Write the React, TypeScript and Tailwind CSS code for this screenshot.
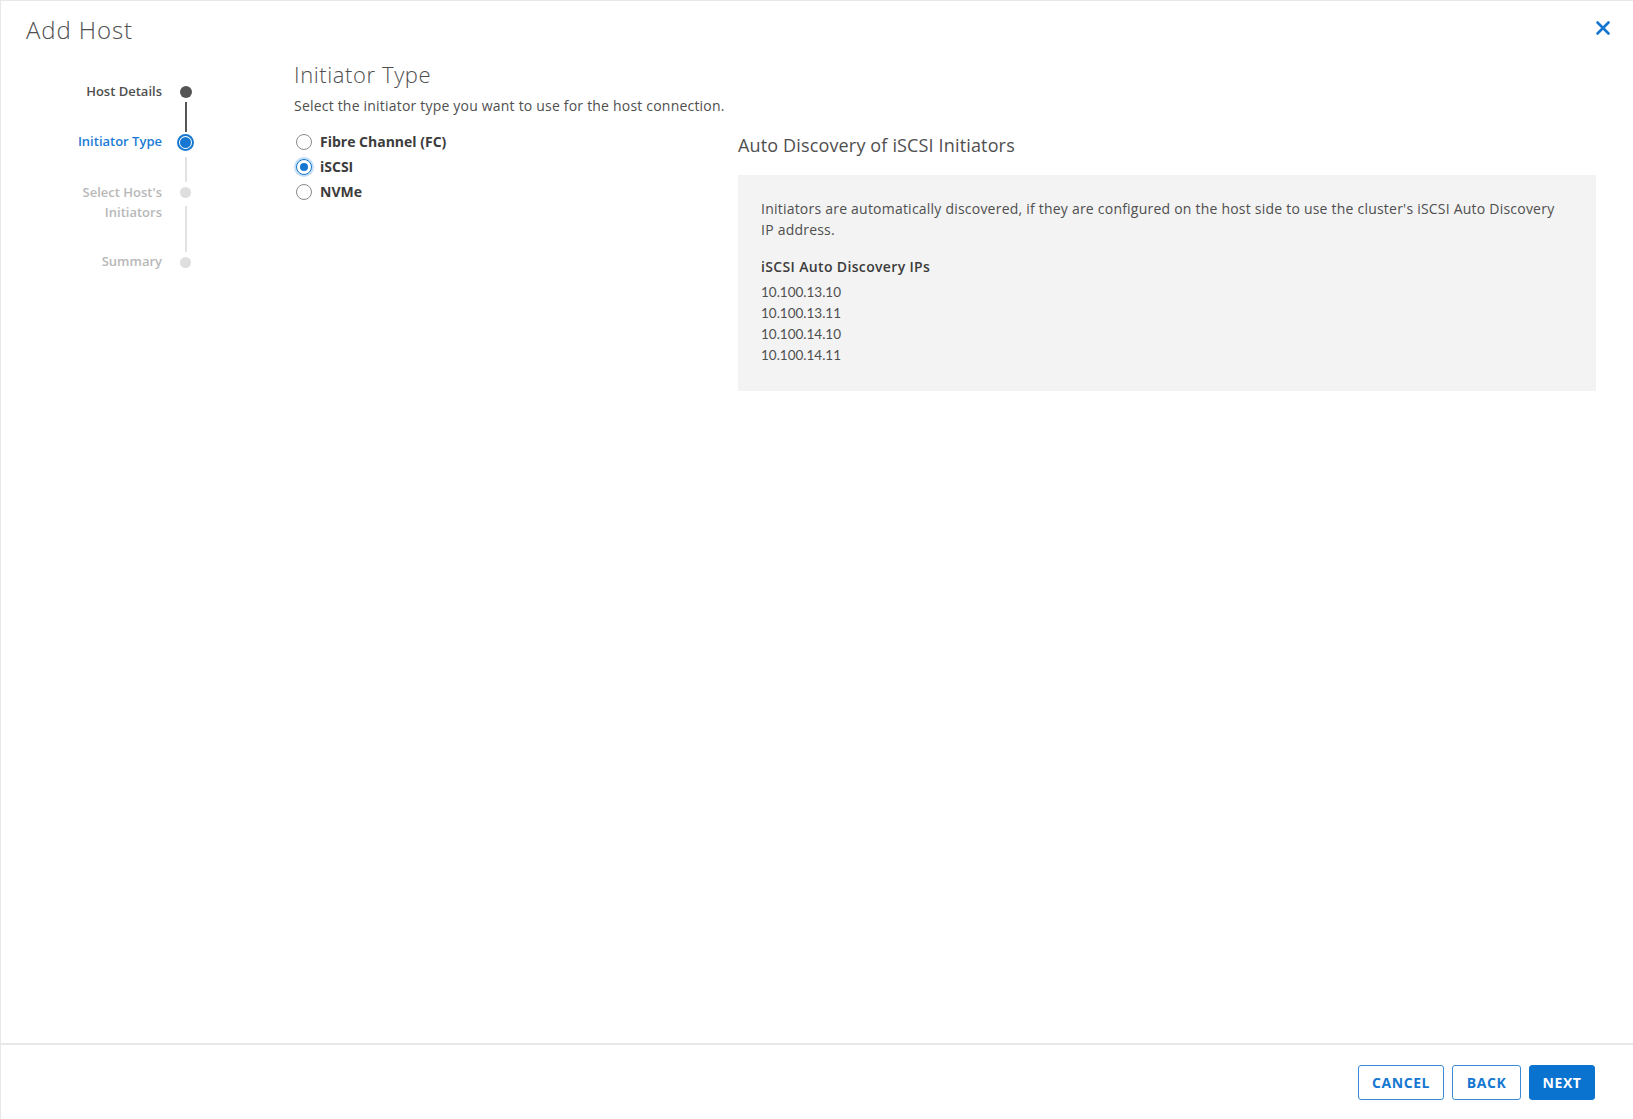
import React from "react";

const font = { fontFamily: "'Open Sans', Lato, sans-serif" };
const ipFont = { fontFamily: "Lato, 'Open Sans', sans-serif" };

function Radio({ checked, label }: { checked?: boolean; label: string }) {
  return (
    <div className="flex h-[25px] items-center">
      <div className="flex w-[26px] items-center">
        {checked ? (
          <div className="ml-[2px] flex h-[16px] w-[16px] items-center justify-center rounded-full border-[1.5px] border-[#1577d1] bg-white shadow-[0_0_0_2px_rgba(90,160,230,0.35)]">
            <div className="h-[8px] w-[8px] rounded-full bg-[#1577d1]" />
          </div>
        ) : (
          <div className="ml-[2px] h-[16px] w-[16px] rounded-full border border-[#8a8a8a] bg-white" />
        )}
      </div>
      <span className="text-[14px] font-bold text-[#3c3c3c]">{label}</span>
    </div>
  );
}

export default function App() {
  return (
    <div
      className="flex h-[1119px] w-[1633px] flex-col border-l border-t border-[#e8e8e8] bg-white text-[#565656]"
      style={font}
    >
      {/* header */}
      <div className="flex h-[44px] shrink-0 items-start justify-between pl-[25px] pr-[22px] pt-[14px]">
        <div className="text-[24px] font-light leading-[30px] tracking-[0.9px] text-[#4f4f4f]">Add Host</div>
        <svg width="16" height="16" viewBox="0 0 16 16" className="mt-[5px]">
          <path d="M2.5 2.5 L13.5 13.5 M13.5 2.5 L2.5 13.5" stroke="#1577d1" strokeWidth="2.6" strokeLinecap="round" />
        </svg>
      </div>

      {/* body */}
      <div className="flex flex-1">
        {/* stepper */}
        <div className="w-[293px] shrink-0 pt-[37px]">
          {/* Host Details */}
          <div className="flex h-[20px] items-center">
            <div className="w-[161px] text-right text-[13px] font-semibold text-[#4f4f4f]">Host Details</div>
            <div className="flex w-[47px] justify-center">
              <div className="h-[12px] w-[12px] rounded-full bg-[#555555]" />
            </div>
          </div>
          <div className="flex">
            <div className="w-[161px]" />
            <div className="flex w-[47px] justify-center">
              <div className="h-[30px] w-[2px] bg-[#555555]" />
            </div>
          </div>
          {/* Initiator Type */}
          <div className="flex h-[20px] items-center">
            <div className="w-[161px] text-right text-[13px] font-semibold text-[#1a7bd6]">Initiator Type</div>
            <div className="flex w-[47px] justify-center">
              <div className="flex h-[17px] w-[17px] items-center justify-center rounded-full bg-[#1577d1]">
                <div className="flex h-[13px] w-[13px] items-center justify-center rounded-full bg-white">
                  <div className="h-[11px] w-[11px] rounded-full bg-[#1577d1]" />
                </div>
              </div>
            </div>
          </div>
          <div className="flex">
            <div className="w-[161px]" />
            <div className="flex w-[47px] justify-center pt-[5px]">
              <div className="h-[25px] w-[2px] bg-[#e3e3e3]" />
            </div>
          </div>
          {/* Select Host's Initiators */}
          <div className="flex">
            <div className="w-[161px] text-right text-[13px] font-semibold leading-[20px] text-[#b8b8b8]">
              Select Host's
              <br />
              Initiators
            </div>
            <div className="flex w-[47px] flex-col items-center">
              <div className="flex h-[20px] items-center">
                <div className="h-[11px] w-[11px] rounded-full bg-[#dedede]" />
              </div>
              <div className="mt-[4px] h-[16px] w-[2px] bg-[#e3e3e3]" />
            </div>
          </div>
          <div className="flex">
            <div className="w-[161px]" />
            <div className="flex w-[47px] justify-center">
              <div className="h-[30px] w-[2px] bg-[#e3e3e3]" />
            </div>
          </div>
          {/* Summary */}
          <div className="flex h-[20px] items-center">
            <div className="w-[161px] text-right text-[13px] font-semibold text-[#b8b8b8]">Summary</div>
            <div className="flex w-[47px] justify-center">
              <div className="h-[11px] w-[11px] rounded-full bg-[#dedede]" />
            </div>
          </div>
        </div>

        {/* content */}
        <div className="flex flex-1 pr-[37px]">
          <div className="w-[444px] shrink-0 pt-[15px]">
            <div className="text-[22px] font-light leading-[28px] tracking-[0.6px] text-[#4f4f4f]">Initiator Type</div>
            <div className="mt-[8px] text-[14px] leading-[20px] tracking-[0.2px] text-[#4f4f4f]">
              Select the initiator type you want to use for the host connection.
            </div>
            <div className="mt-[13px]">
              <Radio label="Fibre Channel (FC)" />
              <Radio label="iSCSI" checked />
              <Radio label="NVMe" />
            </div>
          </div>
          <div className="flex-1 pt-[88px]">
            <div className="text-[18px] leading-[24px] tracking-[0.15px] text-[#4f4f4f]">Auto Discovery of iSCSI Initiators</div>
            <div className="mt-[18px] bg-[#f3f3f3] px-[23px] pb-[25px] pt-[23px] text-[14px] leading-[21px] tracking-[0.22px] text-[#4f4f4f]">
              <div>
                Initiators are automatically discovered, if they are configured on the host side to use the cluster's iSCSI Auto Discovery
                <br />
                IP address.
              </div>
              <div className="mt-[16px] font-semibold tracking-[0.35px] text-[#3c3c3c]">iSCSI Auto Discovery IPs</div>
              <div className="mt-[5px] text-[13.5px] tracking-normal" style={ipFont}>
                <div>10.100.13.10</div>
                <div>10.100.13.11</div>
                <div>10.100.14.10</div>
                <div>10.100.14.11</div>
              </div>
            </div>
          </div>
        </div>
      </div>

      {/* footer */}
      <div className="flex h-[76px] shrink-0 items-start justify-end gap-[8px] border-t-2 border-[#e8e8e8] pr-[38px] pt-[20px]">
        <button className="flex h-[35px] w-[86px] items-center justify-center rounded-[3px] border border-[#3a8ad6] bg-white text-[14px] font-bold tracking-[0.6px] text-[#1577d1]">
          CANCEL
        </button>
        <button className="flex h-[35px] w-[69px] items-center justify-center rounded-[3px] border border-[#3a8ad6] bg-white text-[14px] font-bold tracking-[0.6px] text-[#1577d1]">
          BACK
        </button>
        <button className="flex h-[35px] w-[66px] items-center justify-center rounded-[3px] border border-[#0a72cf] bg-[#0a72cf] text-[14px] font-bold tracking-[0.6px] text-white">
          NEXT
        </button>
      </div>
    </div>
  );
}
